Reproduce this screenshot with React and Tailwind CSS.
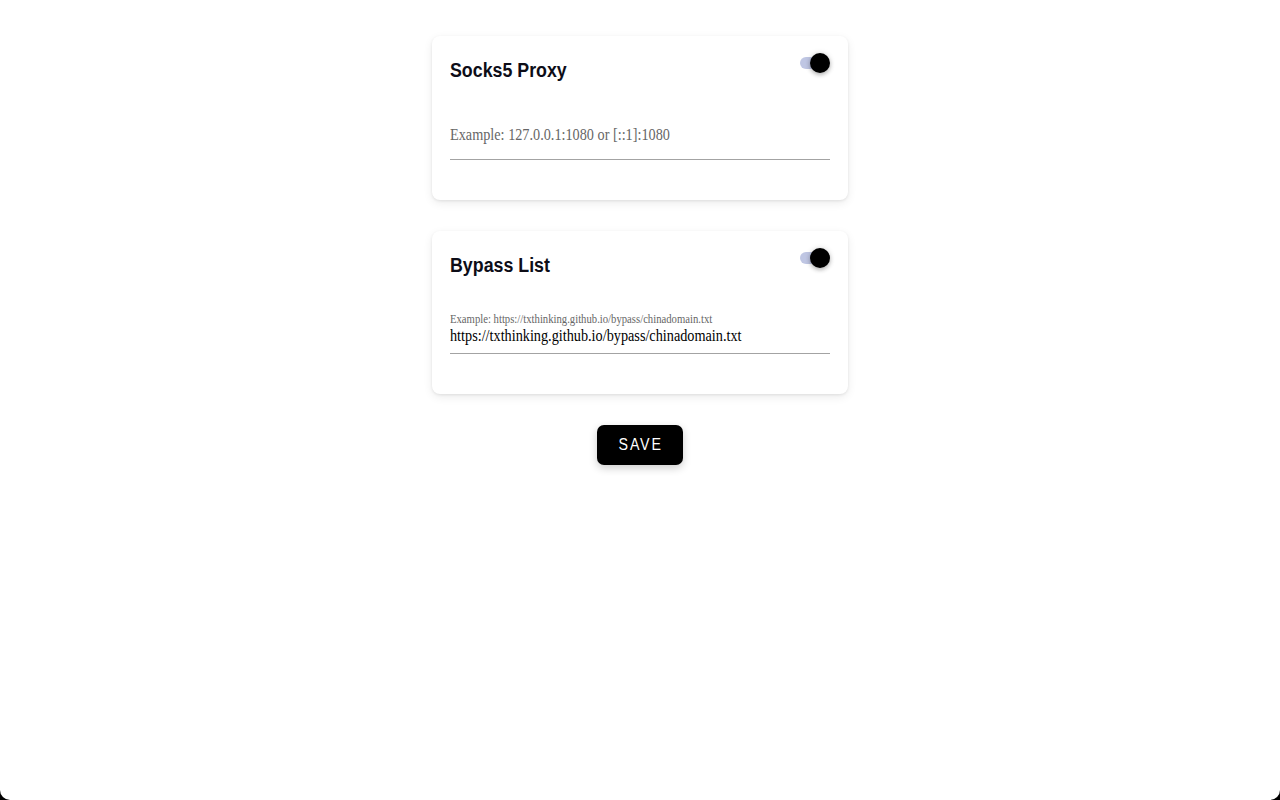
import React, { useState } from "react";

function Toggle() {
  return (
    <div className="relative w-[32px] h-[20px] mt-[-1px]">
      <div className="absolute left-[2px] top-[4px] w-[25px] h-[12px] rounded-full bg-[#bfc6e3]" />
      <div className="absolute right-0 top-0 w-[20px] h-[20px] rounded-full bg-black shadow-[0_2px_4px_rgba(0,0,0,0.25),0_0_6px_rgba(0,0,0,0.12)]" />
    </div>
  );
}

function Card({ title, children }) {
  return (
    <div className="w-[416px] rounded-[8px] bg-white px-[18px] pt-[18px] pb-[40px] shadow-[0_1px_3px_rgba(0,0,0,0.08),0_3px_10px_rgba(0,0,0,0.08)]">
      <div className="flex h-[32px] items-start justify-between">
        <div
          className="inline-block origin-left scale-x-[0.89] whitespace-nowrap text-[20px] font-bold leading-[32px] text-[#0d0d17]"
          style={{ fontFamily: '"Liberation Sans", Arial, sans-serif' }}
        >
          {title}
        </div>
        <Toggle />
      </div>
      {children}
    </div>
  );
}

export default function App() {
  const [bypass, setBypass] = useState("https://txthinking.github.io/bypass/chinadomain.txt");
  const serif = { fontFamily: '"Liberation Serif", "Times New Roman", serif' };
  return (
    <div className="bg-black">
      <div className="h-[800px] w-full bg-white rounded-b-[10px] flex flex-col items-center pt-[36px]">
        <Card title="Socks5 Proxy">
          <div className="mt-[39px] overflow-hidden border-b border-[#a3a3a3] pb-[14px]">
            <input
              className="block h-[20px] w-[427px] origin-left scale-x-[0.89] bg-transparent text-[16px] leading-[20px] text-black outline-none placeholder:text-[#666666]"
              style={serif}
              placeholder="Example: 127.0.0.1:1080 or [::1]:1080"
            />
          </div>
        </Card>
        <div className="h-[31px]" />
        <Card title="Bypass List">
          <div className="mt-[31px] overflow-hidden border-b border-[#a3a3a3] pb-[7px]">
            <div
              className="h-[14px] w-[427px] origin-left scale-x-[0.89] whitespace-nowrap text-[12px] leading-[14px] text-[#666666]"
              style={serif}
            >
              Example: https://txthinking.github.io/bypass/chinadomain.txt
            </div>
            <input
              className="block h-[20px] w-[427px] origin-left scale-x-[0.89] bg-transparent text-[16px] leading-[20px] text-black outline-none"
              style={serif}
              value={bypass}
              onChange={(e) => setBypass(e.target.value)}
            />
          </div>
        </Card>
        <button
          className="mt-[31px] flex h-[40px] w-[86px] items-center justify-center rounded-[7px] bg-black text-white shadow-[0_3px_8px_rgba(0,0,0,0.2)]"
          style={{ fontFamily: '"Liberation Sans", Arial, sans-serif' }}
        >
          <span className="inline-block scale-x-[0.89] pl-[2px] text-[16px] tracking-[2px]">SAVE</span>
        </button>
      </div>
    </div>
  );
}
